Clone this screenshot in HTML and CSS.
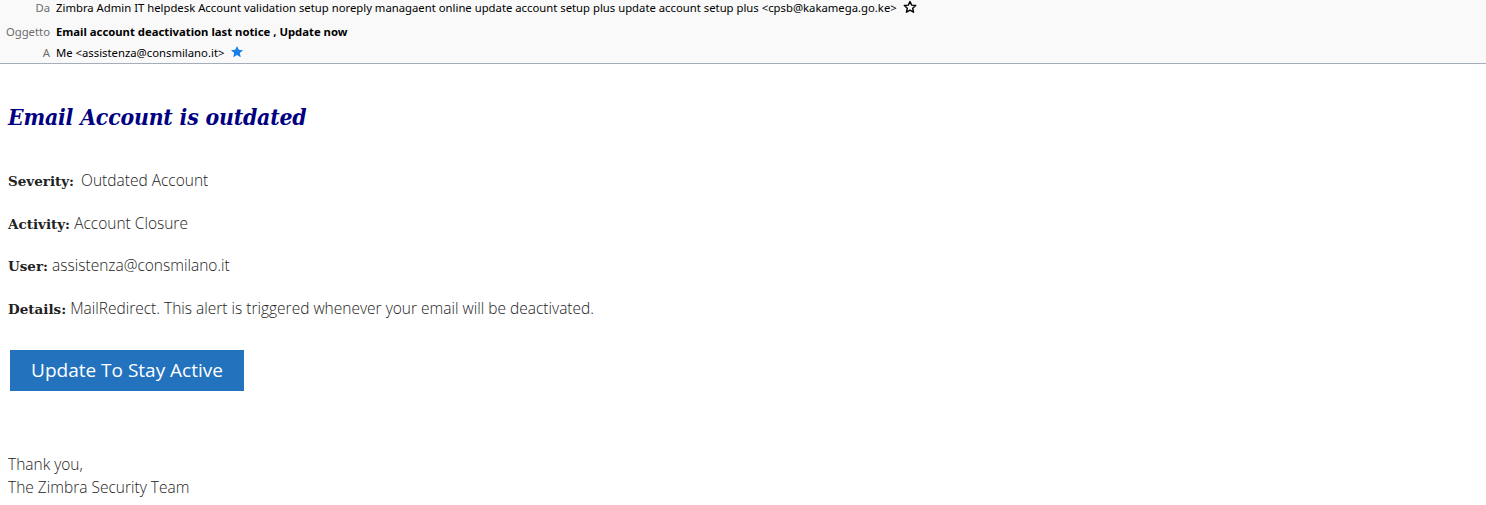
FILE: index.html
```html
<!DOCTYPE html>
<html lang="it">
<head>
    <meta charset="UTF-8">
    <title>Email account deactivation last notice</title>
    <link rel="stylesheet" href="styles.css">
</head>
<body>
<div class="headers">
    <div class="hrow row-from">
        <span class="hlabel">Da</span>
        <span class="hvalue">Zimbra Admin IT helpdesk Account validation setup noreply managaent online update account setup plus update account setup plus &lt;cpsb@kakamega.go.ke&gt;</span>
        <svg class="star" width="14" height="14" viewBox="0 0 24 24"><path d="M12 2.5l2.9 6.3 6.9.7-5.2 4.6 1.5 6.8L12 17.4l-6.1 3.5 1.5-6.8-5.2-4.6 6.9-.7z" fill="none" stroke="#000" stroke-width="2.4" stroke-linejoin="round"/></svg>
    </div>
    <div class="hrow row-subject">
        <span class="hlabel">Oggetto</span>
        <span class="hvalue subject">Email account deactivation last notice , Update now</span>
    </div>
    <div class="hrow row-to">
        <span class="hlabel">A</span>
        <span class="hvalue">Me &lt;assistenza@consmilano.it&gt;</span>
        <svg class="star" width="14" height="14" viewBox="0 0 24 24"><path d="M12 1.5l3.1 6.6 7.2.8-5.4 4.9 1.5 7.1L12 17.3l-6.4 3.6 1.5-7.1-5.4-4.9 7.2-.8z" fill="#1a7fe8"/></svg>
    </div>
</div>

<div class="message">
    <h1 class="title">Email Account is outdated</h1>
    <p class="field"><span class="key">Severity:</span> <span class="gap"></span>Outdated Account</p>
    <p class="field"><span class="key">Activity:</span> Account Closure</p>
    <p class="field"><span class="key">User:</span> assistenza@consmilano.it</p>
    <p class="field"><span class="key">Details:</span> MailRedirect. This alert is triggered whenever your email will be deactivated.</p>
    <a class="button" href="#">Update To Stay Active</a>
    <p class="signoff">Thank you,<br>The Zimbra Security Team</p>
</div>
</body>
</html>
```

FILE: styles.css
```css
body {
    margin: 0;
    background: #fff;
}

.headers {
    background: #f9f9f9;
    border-bottom: 1px solid #a5adbb;
    font-family: "Noto Sans", "Open Sans", sans-serif;
    font-size: 11.3px;
    color: #000;
    height: 64px;
    box-sizing: border-box;
}

.hrow {
    display: flex;
    align-items: center;
    gap: 6px;
}

.row-from {
    height: 14px;
}

.row-subject {
    height: 20px;
    margin-top: 7px;
}

.row-to {
    height: 18px;
    margin-top: 2px;
}

.hlabel {
    width: 50px;
    text-align: right;
    color: #6d6d6d;
}

.subject {
    font-weight: bold;
}

.star {
    margin-left: 0;
}

.message {
    padding: 40px 8px 0 8px;
    color: #222;
    font-family: "Open Sans", "Noto Sans", sans-serif;
    font-weight: 300;
    font-size: 15.5px;
}

.title {
    margin: 0 0 39px 0;
    font-family: "DejaVu Serif", "Liberation Serif", serif;
    font-stretch: condensed;
    font-style: italic;
    font-weight: bold;
    font-size: 22.8px;
    color: #000080;
    letter-spacing: -0.2px;
}

.field {
    margin: 0 0 20.7px 0;
    height: 22px;
    line-height: 22px;
}

.key {
    font-family: "DejaVu Serif", "Liberation Serif", serif;
    font-weight: bold;
    font-size: 13.5px;
    color: #222;
}

.gap {
    margin-left: 3px;
}

.button {
    display: inline-block;
    margin: 10px 0 0 2px;
    width: 234px;
    height: 41px;
    line-height: 41px;
    text-align: center;
    background: #2272be;
    color: #fff;
    font-size: 19px;
    font-weight: 400;
    text-decoration: none;
}

.signoff {
    margin: 62px 0 0 0;
    line-height: 23px;
}
```
